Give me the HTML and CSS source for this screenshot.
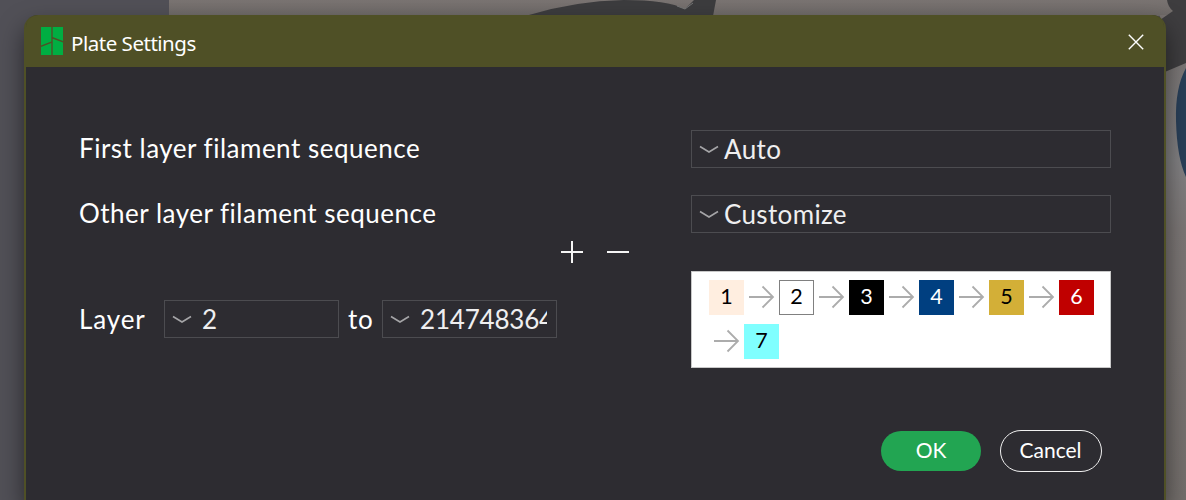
FILE: index.html
```html
<!DOCTYPE html>
<html lang="en">
<head>
<meta charset="utf-8">
<title>Plate Settings</title>
<link rel="stylesheet" href="styles.css">
</head>
<body>
<svg class="backdrop" viewBox="0 0 1186 500" aria-hidden="true">
  <defs>
    <linearGradient id="wall" x1="0" y1="0" x2="0" y2="1"><stop offset="0" stop-color="#7a7472"/><stop offset="1" stop-color="#6e6967"/></linearGradient>
    <linearGradient id="side" x1="0" y1="0" x2="0" y2="1"><stop offset="0" stop-color="#77716f"/><stop offset=".3" stop-color="#818082"/><stop offset=".44" stop-color="#7b7675"/><stop offset="1" stop-color="#736e6b"/></linearGradient>
  </defs>
  <rect width="1186" height="500" fill="#515057"/>
  <rect x="169" width="1017" height="16" fill="url(#wall)"/>
  <rect x="1160" y="15" width="26" height="485" fill="url(#side)"/>
  <path d="M529 15Q575 1 624 0Q667 0 685 9L694 0H716L713 16H525Z" fill="#3c3c3e"/>
  <path d="M677 6L685 9L693 3" fill="none" stroke="#777" stroke-width="1"/>
  <path d="M1167 0Q1168 7 1173 11L1160 20V74L1186 63V0Z" fill="#3e3d3f"/>
  <path d="M1186 68Q1175 88 1176 121Q1177 158 1186 177Z" fill="#293f58"/>
</svg>
<main class="dialog">
  <header class="titlebar">
    <svg class="logo" viewBox="0 0 22 28"><path fill="#00ae42" d="M0 0H10.3V14.6L0 18.4ZM11.7 0H22V13.9L11.7 10.1ZM0 20L10.3 16.1V28H0ZM11.7 11.8L22 15.5V28H11.7Z"/></svg>
    <h1 class="title">Plate Settings</h1>
    <svg class="close" viewBox="0 0 16 16"><path d="M.8 .8L15.2 15.2M15.2 .8L.8 15.2"/></svg>
  </header>
  <div class="content">
    <div class="row">
      <span class="label">First layer filament sequence</span>
      <div class="select"><svg class="chevron" viewBox="0 0 20 9"><path d="M1 1.5L10 7L19 1.5"/></svg><span class="auto">Auto</span></div>
    </div>
    <div class="row second">
      <span class="label">Other layer filament sequence</span>
      <div class="select"><svg class="chevron" viewBox="0 0 20 9"><path d="M1 1.5L10 7L19 1.5"/></svg><span class="customize">Customize</span></div>
    </div>
    <div class="custom">
      <div class="range">
        <div class="tools">
          <svg viewBox="0 0 22 22"><path d="M0 11H22M11 0V22"/></svg>
          <svg viewBox="0 0 22 22"><path d="M0 11H22"/></svg>
        </div>
        <div class="layers">
          <span class="layer-label">Layer</span>
          <div class="select number"><svg class="chevron" viewBox="0 0 20 9"><path d="M1 1.5L10 7L19 1.5"/></svg><span class="value">2</span></div>
          <span class="to">to</span>
          <div class="select number"><svg class="chevron" viewBox="0 0 20 9"><path d="M1 1.5L10 7L19 1.5"/></svg><span class="value">2147483647</span></div>
        </div>
      </div>
      <div class="sequence">
        <span class="chip c1">1</span>
        <svg class="arrow" viewBox="0 0 35 35"><path d="M5 17H29M18.5 6.5L29 17L18.5 27.5"/></svg>
        <span class="chip c2">2</span>
        <svg class="arrow" viewBox="0 0 35 35"><path d="M5 17H29M18.5 6.5L29 17L18.5 27.5"/></svg>
        <span class="chip c3">3</span>
        <svg class="arrow" viewBox="0 0 35 35"><path d="M5 17H29M18.5 6.5L29 17L18.5 27.5"/></svg>
        <span class="chip c4">4</span>
        <svg class="arrow" viewBox="0 0 35 35"><path d="M5 17H29M18.5 6.5L29 17L18.5 27.5"/></svg>
        <span class="chip c5">5</span>
        <svg class="arrow" viewBox="0 0 35 35"><path d="M5 17H29M18.5 6.5L29 17L18.5 27.5"/></svg>
        <span class="chip c6">6</span>
        <svg class="arrow" viewBox="0 0 35 35"><path d="M5 17H29M18.5 6.5L29 17L18.5 27.5"/></svg>
        <span class="chip c7">7</span>
      </div>
    </div>
    <footer class="actions">
      <button class="btn ok">OK</button>
      <button class="btn cancel">Cancel</button>
    </footer>
  </div>
</main>
</body>
</html>
```
FILE: styles.css
```css
* { box-sizing: border-box; }
body { margin: 0; height: 500px; overflow: hidden; background: #515057; font-family: Lato, "Noto Sans", sans-serif; color: #fff; }
svg { display: block; flex: none; }
.backdrop { position: absolute; inset: 0; width: 1186px; height: 500px; }
.dialog { position: relative; width: 1142px; height: 485px; margin: 15px 0 0 24px; background: #2d2c31; border: 2px solid #4f5026; border-width: 0 2px; border-radius: 14px 14px 0 0; box-shadow: 0 12px 25px rgba(0,0,0,.5); }
.titlebar { display: flex; align-items: center; height: 52px; padding: 0 20px 0 15px; background: #4f5026; border-radius: 12px 12px 0 0; }
.logo { width: 22px; height: 28px; }
.title { margin: 3px 0 0 8px; font: 400 20.5px/28px "Noto Sans", sans-serif; letter-spacing: -.48px; }
.close { width: 16px; height: 16px; margin: 1px 0 0 auto; }
.close path { fill: none; stroke: #fff; stroke-width: 1.4; }
.content { padding: 63px 53px 0; }
.row { display: flex; align-items: center; justify-content: space-between; height: 38px; }
.second { margin-top: 27px; }
.label, .layer-label, .to { font-size: 26px; line-height: 38px; white-space: nowrap; }
.label { margin-top: -3px; letter-spacing: .5px; }
.select { display: flex; align-items: center; width: 420px; height: 38px; padding-left: 7px; border: 1px solid #4c4c50; font-size: 26px; line-height: 36px; color: #efeff0; }
.chevron { width: 20px; height: 9px; }
.chevron path { fill: none; stroke: #a5a5a7; stroke-width: 1.6; }
.select span { margin-left: 5px; }
.auto { letter-spacing: .4px; }
.customize { letter-spacing: .35px; }
.custom { display: flex; justify-content: space-between; align-items: flex-start; height: 135px; }
.range { width: 550px; padding-top: 8px; }
.tools { display: flex; justify-content: flex-end; gap: 24px; height: 59px; }
.tools svg { width: 22px; height: 22px; }
.tools path { fill: none; stroke: #f5f5f5; stroke-width: 2; }
.layers { display: flex; align-items: center; }
.layer-label { width: 85px; letter-spacing: .9px; }
.to { width: 43px; padding-left: 9px; letter-spacing: .7px; }
.select.number { width: 175px; }
.select.number .value { width: 127px; margin-left: 10px; overflow: hidden; letter-spacing: -.2px; }
.sequence { display: flex; flex-wrap: wrap; align-content: flex-start; row-gap: 9px; width: 420px; height: 97px; margin-top: 38px; padding: 8px 13px 0 17px; background: #fff; border: 1px solid #c8c8c8; }
.arrow, .chip { width: 35px; height: 35px; }
.arrow path { fill: none; stroke: #acacac; stroke-width: 1.8; }
.chip { flex: none; font-size: 21.5px; line-height: 33px; text-align: center; color: #000; }
.c1 { background: #ffeee0; }
.c2 { border: 1px solid #808080; line-height: 31px; }
.c3 { background: #000; color: #fff; }
.c4 { background: #003f80; color: #fff; }
.c5 { background: #d3af37; }
.c6 { background: #c00000; color: #fff; }
.c7 { background: #80ffff; }
.actions { display: flex; align-items: center; justify-content: flex-end; gap: 19px; margin-top: 62px; padding-right: 9px; }
.btn { padding: 0 0 2px; border: 0; border-radius: 21px; font: 400 21px/38px Lato, sans-serif; color: #fff; }
.ok { width: 100px; height: 40px; background: #22a552; }
.cancel { width: 102px; height: 42px; padding-right: 1px; border: 1px solid #f0f0f0; background: none; }
```
